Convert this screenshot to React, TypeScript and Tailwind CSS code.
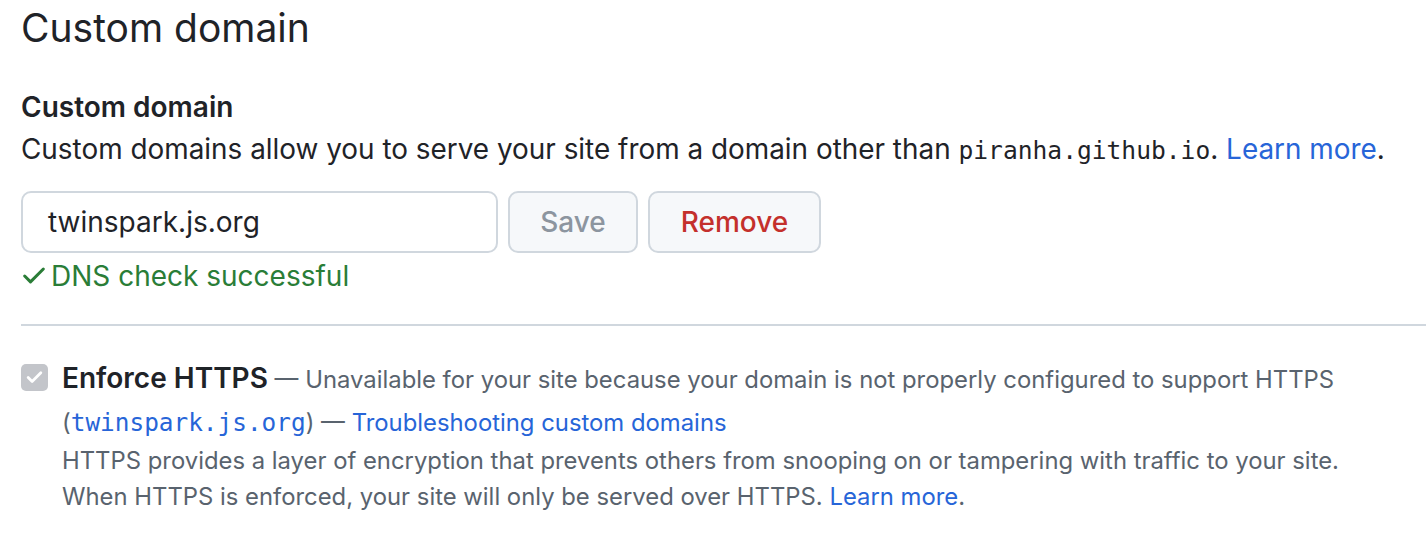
import { Check } from 'lucide-react';

const sans = 'font-["Inter","Liberation_Sans",sans-serif]';
const mono = 'font-["DejaVu_Sans_Mono","Liberation_Mono",monospace]';

export default function App() {
    return (
        <div className={`min-h-screen bg-white text-[#1f2328] ${sans}`}>
            <div className="pl-[21px]">
                {/* Page title */}
                <h2 className="text-[39px] leading-[56px] font-normal">Custom domain</h2>

                {/* Custom domain form */}
                <div className="pt-[30px]">
                    <h3 className="text-[28px] leading-[42px] font-semibold">Custom domain</h3>
                    <p className="text-[27.9px] leading-[42px]">
                        Custom domains allow you to serve your site from a domain other than{' '}
                        <code className={`${mono} text-[24.6px]`}>piranha.github.io</code>.{' '}
                        <a className="text-[#2765d8]">Learn more</a>.
                    </p>

                    <div className="flex items-center gap-[10px] mt-[19px]">
                        <div className="w-[477px] h-[62px] rounded-[10px] border-2 border-[#d0d7de] flex items-center px-[25px] text-[28px]">
                            twinspark.js.org
                        </div>
                        <button className="h-[62px] w-[130px] rounded-[10px] border-2 border-[#d0d7de] bg-[#f6f8fa] text-[28px] font-medium text-[#8c959f]">
                            Save
                        </button>
                        <button className="h-[62px] w-[173px] rounded-[10px] border-2 border-[#d0d7de] bg-[#f6f8fa] text-[28px] font-medium text-[#c4302c]">
                            Remove
                        </button>
                    </div>

                    <div className="flex items-center gap-[3px] text-[28px] text-[#2a7d37] leading-[42px] mt-[2px]">
                        <Check className="w-[28px] h-[28px] -ml-[1px]" strokeWidth={2.6} />
                        <span>DNS check successful</span>
                    </div>
                </div>

                {/* Divider */}
                <div className="border-t-2 border-[#d0d7de] mt-[27px]" />

                {/* Enforce HTTPS */}
                <div className="flex items-start gap-[14px] pt-[31px]">
                    <div className="w-[27px] h-[27px] rounded-[5px] bg-[#c3c5ca] flex items-center justify-center shrink-0 mt-[7px]">
                        <Check className="w-[19px] h-[19px] text-white" strokeWidth={3.5} />
                    </div>
                    <div>
                        <div className="leading-[42px]">
                            <span className="text-[28px] font-semibold">Enforce HTTPS</span>
                            <span className="text-[23.85px] text-[#59636e]">
                                {' '}— Unavailable for your site because your domain is not properly configured to support HTTPS
                            </span>
                        </div>
                        <div className="text-[23.85px] text-[#59636e] leading-[40px]">
                            (<code className={`${mono} text-[24.4px] text-[#2765d8]`}>twinspark.js.org</code>) —{' '}
                            <a className="text-[#2765d8]">Troubleshooting custom domains</a>
                        </div>
                        <p className="text-[23.85px] text-[#59636e] leading-[36px]">
                            HTTPS provides a layer of encryption that prevents others from snooping on or tampering with traffic to your site.
                            <br />
                            When HTTPS is enforced, your site will only be served over HTTPS.{' '}
                            <a className="text-[#2765d8]">Learn more</a>.
                        </p>
                    </div>
                </div>
            </div>
        </div>
    );
}
